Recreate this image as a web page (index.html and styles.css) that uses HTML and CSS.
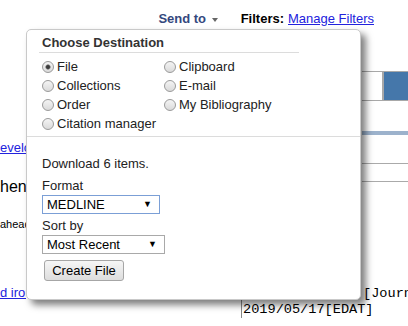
FILE: index.html
```html
<!DOCTYPE html>
<html lang="en">
<head>
  <meta charset="UTF-8">
  <meta name="viewport" content="width=device-width, initial-scale=1.0">
  <title>Send to</title>
  <link rel="stylesheet" href="styles.css">
</head>
<body>
  <div class="topbar">
    <span class="send-to">Send to <span class="caret"></span></span>
    <span class="filters">Filters:</span>
    <a href="#" class="manage">Manage Filters</a>
  </div>

  <div class="main">
    <div class="results">
      <a href="#" class="res-link">evelopment</a>
      <p class="res-big">hen</p>
      <p class="res-small">ahead</p>
    </div>
    <div class="sidebar">
      <div class="search">
        <span class="search-input"></span>
        <span class="search-btn"></span>
      </div>
      <div class="side-bar-blue"></div>
      <div class="side-rule first"></div>
      <div class="side-rule"></div>
    </div>
  </div>

  <div class="record">
    <div class="record-left">
      <a href="#" class="res-link">d iron</a>
    </div>
    <div class="record-right">
      <div class="mono-line"><span class="mono-pub">2019 May 16</span>[Journal Article]</div>
      <div class="mono-line">2019/05/17[EDAT]</div>
    </div>
  </div>

  <!-- send to dropdown -->
  <div class="popup">
    <h3 class="dest-title">Choose Destination</h3>
    <div class="dest-grid">
      <label class="opt"><input type="radio" name="dest" checked>File</label>
      <label class="opt"><input type="radio" name="dest">Clipboard</label>
      <label class="opt"><input type="radio" name="dest">Collections</label>
      <label class="opt"><input type="radio" name="dest">E-mail</label>
      <label class="opt"><input type="radio" name="dest">Order</label>
      <label class="opt"><input type="radio" name="dest">My Bibliography</label>
      <label class="opt"><input type="radio" name="dest">Citation manager</label>
    </div>

    <div class="file-opts">
      <p class="count">Download 6 items.</p>
      <label class="field-label" for="format">Format</label>
      <span class="select select-format">
        <select id="format"><option>MEDLINE</option></select>
      </span>
      <label class="field-label" for="sort">Sort by</label>
      <span class="select select-sort">
        <select id="sort"><option>Most Recent</option></select>
      </span>
      <button class="btn" type="button">Create File</button>
    </div>
  </div>
</body>
</html>
```

FILE: styles.css
```css
body {
  font-family: "Liberation Sans", Arial, sans-serif;
  font-size: 13px;
  line-height: 16px;
  color: #000;
  margin: 0;
  width: 408px;
  height: 326px;
  overflow: hidden;
  position: relative;
  background-color: #fff;
}

a {
  color: #2222dd;
}

p {
  margin: 0;
}

.topbar {
  display: flex;
  justify-content: flex-end;
  align-items: baseline;
  height: 38px;
  box-sizing: border-box;
  padding: 11px 34px 0 0;
}

.send-to {
  font-weight: bold;
  color: #34487e;
}

.caret {
  display: inline-block;
  width: 0;
  height: 0;
  margin-left: 2px;
  border-left: 3.5px solid transparent;
  border-right: 3.5px solid transparent;
  border-top: 4px solid #666;
  vertical-align: middle;
}

.filters {
  font-weight: bold;
  margin-left: 23px;
}

.manage {
  margin-left: 4px;
}

.main {
  display: grid;
  grid-template-columns: 1fr 46px;
  height: 247px;
}

.results {
  width: 26px;
  overflow: hidden;
  white-space: nowrap;
}

.res-link {
  display: block;
  margin-top: 102px;
  white-space: nowrap;
}

.res-big {
  font-size: 16px;
  line-height: 18px;
  margin-top: 22px;
}

.res-small {
  font-size: 11px;
  line-height: 14px;
  margin-top: 21px;
}

.search {
  display: flex;
  height: 30px;
  margin-top: 33px;
  border-top: 1px solid #a8a8a8;
  border-bottom: 1px solid #a8a8a8;
  box-sizing: border-box;
}

.search-input {
  width: 20px;
  border-right: 2px solid #a8a8a8;
}

.search-btn {
  flex: 1;
  background-color: #4577aa;
}

.side-bar-blue {
  height: 4px;
  margin-top: 30px;
  background-color: #9cb2cc;
}

.side-rule {
  height: 1px;
  margin-top: 17px;
  background-color: #aaa;
}

.side-rule.first {
  margin-top: 28px;
}

.record {
  display: grid;
  grid-template-columns: 241px 1fr;
}

.record-left {
  width: 26px;
  overflow: hidden;
}

.record-left .res-link {
  margin-top: 0;
}

.record-right {
  border-left: 1px solid #888;
  padding: 1px 0 0 1px;
  white-space: nowrap;
  overflow: hidden;
}

.mono-line {
  font-family: "Liberation Mono", "Courier New", monospace;
  font-size: 13.6px;
  line-height: 16px;
}

.mono-pub {
  display: inline-block;
  width: 120px;
  overflow: hidden;
  vertical-align: top;
  color: #777;
}

/* dropdown */
.popup {
  position: absolute;
  left: 26px;
  top: 29px;
  width: 335px;
  height: 271px;
  box-sizing: border-box;
  background-color: #fff;
  border: 1px solid #c9c9c9;
  border-radius: 5px;
  box-shadow: 5px 5px 7px rgba(0, 0, 0, 0.5);
  color: #222;
}

.dest-title {
  font-size: 13px;
  line-height: 16px;
  font-weight: bold;
  color: #333;
  margin: 0 0 0 12px;
  width: 260px;
  padding: 5px 0 1px 3px;
  border-bottom: 1px solid #dcdcdc;
  box-sizing: border-box;
}

.dest-grid {
  display: grid;
  grid-template-columns: 122px 1fr;
  grid-auto-rows: 19px;
  padding-left: 15px;
  margin-top: 4px;
}

.opt {
  display: flex;
  align-items: center;
  color: #222;
}

.opt input {
  appearance: none;
  width: 12px;
  height: 12px;
  margin: 0 3px 0 0;
  border: 1px solid #9a9a9a;
  border-radius: 50%;
  background: linear-gradient(#f4f4f4, #dadada);
  box-sizing: border-box;
}

.opt input:checked {
  background: radial-gradient(circle, #3c3c3c 0, #3c3c3c 1.5px, rgba(60, 60, 60, 0.4) 2.5px, transparent 3px),
    linear-gradient(#f4f4f4, #dadada);
}

.file-opts {
  margin-top: 3px;
  border-top: 1px solid #dcdcdc;
  padding: 19px 15px 0;
}

.field-label {
  display: block;
  margin-top: 6px;
}

.select {
  display: block;
  position: relative;
  margin-top: 1px;
  height: 19px;
}

.select select {
  appearance: none;
  height: 19px;
  width: 100%;
  margin: 0;
  padding: 0 0 0 4px;
  font-family: "Liberation Sans", Arial, sans-serif;
  font-size: 13px;
  color: #000;
  background-color: #fff;
  border: 1px solid #a9a9a9;
  border-radius: 0;
  box-sizing: border-box;
}

.select::after {
  content: "\25BC";
  position: absolute;
  right: 8px;
  top: 4px;
  font-size: 9px;
  line-height: 10px;
  color: #000;
}

.select-format {
  width: 118px;
}

.select-format select {
  border-color: #7b9fd6;
}

.select-sort {
  width: 123px;
}

.btn {
  display: block;
  margin: 6px 0 0 2px;
  width: 80px;
  height: 21px;
  padding: 0;
  font-family: "Liberation Sans", Arial, sans-serif;
  font-size: 13px;
  color: #000;
  background: linear-gradient(#f6f6f6, #dddddd);
  border: 1px solid #a6a6a6;
  border-radius: 3px;
}

.select + .field-label {
  margin-top: 4px;
}
```
